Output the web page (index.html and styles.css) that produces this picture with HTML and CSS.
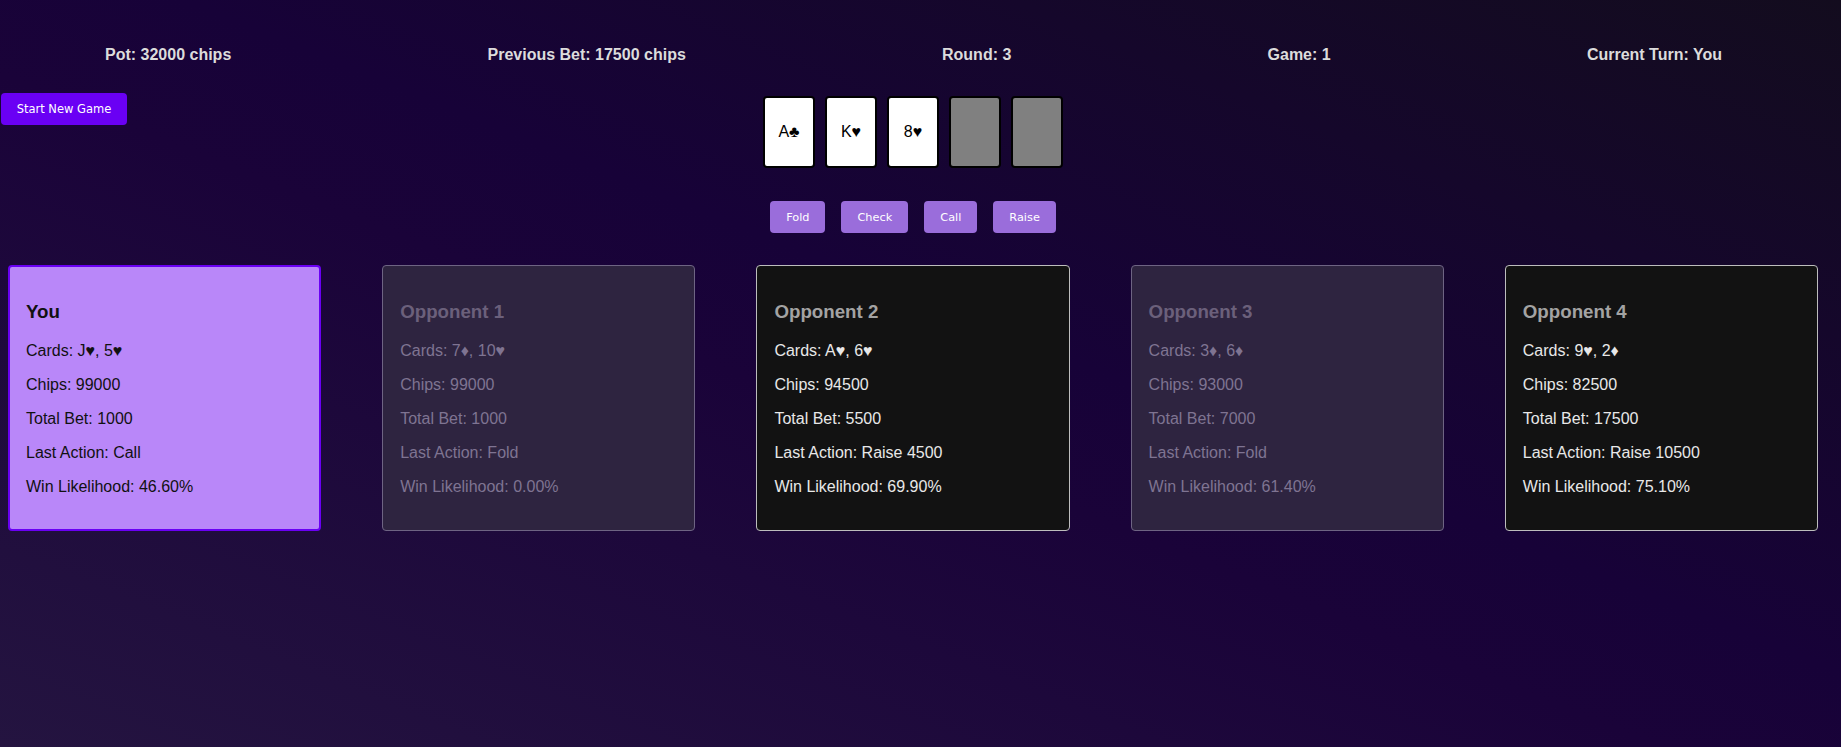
FILE: index.html
```html
<!DOCTYPE html>
<html lang="en">
<head>
<meta charset="utf-8">
<title>Poker</title>
<link rel="stylesheet" href="styles.css">
</head>
<body>
<div class="app">
  <header class="status">
    <div class="stat">Pot: 32000 chips</div>
    <div class="stat">Previous Bet: 17500 chips</div>
    <div class="stat">Round: 3</div>
    <div class="stat">Game: 1</div>
    <div class="stat">Current Turn: You</div>
  </header>

  <section class="table">
    <div class="left">
      <button class="btn-start">Start New Game</button>
    </div>
    <div class="middle">
      <div class="community">
        <div class="pcard">A♣</div>
        <div class="pcard">K♥</div>
        <div class="pcard">8♥</div>
        <div class="pcard hidden"></div>
        <div class="pcard hidden"></div>
      </div>
      <div class="actions">
        <button class="btn-act">Fold</button>
        <button class="btn-act">Check</button>
        <button class="btn-act">Call</button>
        <button class="btn-act">Raise</button>
      </div>
    </div>
    <div class="right"></div>
  </section>

  <section class="players">
    <div class="player you">
      <h3>You</h3>
      <p>Cards: J♥, 5♥</p>
      <p>Chips: 99000</p>
      <p>Total Bet: 1000</p>
      <p>Last Action: Call</p>
      <p>Win Likelihood: 46.60%</p>
    </div>
    <div class="player folded">
      <h3>Opponent 1</h3>
      <p>Cards: 7♦, 10♥</p>
      <p>Chips: 99000</p>
      <p>Total Bet: 1000</p>
      <p>Last Action: Fold</p>
      <p>Win Likelihood: 0.00%</p>
    </div>
    <div class="player active">
      <h3>Opponent 2</h3>
      <p>Cards: A♥, 6♥</p>
      <p>Chips: 94500</p>
      <p>Total Bet: 5500</p>
      <p>Last Action: Raise 4500</p>
      <p>Win Likelihood: 69.90%</p>
    </div>
    <div class="player folded">
      <h3>Opponent 3</h3>
      <p>Cards: 3♦, 6♦</p>
      <p>Chips: 93000</p>
      <p>Total Bet: 7000</p>
      <p>Last Action: Fold</p>
      <p>Win Likelihood: 61.40%</p>
    </div>
    <div class="player active">
      <h3>Opponent 4</h3>
      <p>Cards: 9♥, 2♦</p>
      <p>Chips: 82500</p>
      <p>Total Bet: 17500</p>
      <p>Last Action: Raise 10500</p>
      <p>Win Likelihood: 75.10%</p>
    </div>
  </section>
</div>
</body>
</html>
```

FILE: styles.css
```css
* { box-sizing: border-box; }

html, body {
  margin: 0;
  padding: 0;
}

body {
  min-height: 747px;
  font-family: "Liberation Sans", Arial, sans-serif;
  color: #dddddd;
  background: linear-gradient(to top right, #241440 0%, #1a0339 45%, #170238 55%, #130c1e 100%);
}

.app {
  width: 1826px;
}

.status {
  display: flex;
  justify-content: space-between;
  padding: 46px 104px 0 105px;
}

.stat {
  font-size: 16px;
  font-weight: bold;
  line-height: 18px;
  color: #dcdcdc;
}

.table {
  display: grid;
  grid-template-columns: 1fr auto 1fr;
  align-items: start;
  margin-top: 29px;
}

.left {
  padding-left: 1px;
}

.btn-start {
  font-family: "DejaVu Sans", Verdana, sans-serif;
  font-size: 11.5px;
  color: #ffffff;
  background: #6a00f4;
  border: none;
  border-radius: 4px;
  height: 32px;
  width: 126px;
  padding: 0;
  cursor: pointer;
}

.middle {
  display: flex;
  flex-direction: column;
  align-items: center;
  padding-top: 3px;
}

.community {
  display: flex;
  gap: 10px;
}

.pcard {
  width: 52px;
  height: 72px;
  border: 2px solid #000000;
  border-radius: 4px;
  background: #ffffff;
  color: #000000;
  display: flex;
  align-items: center;
  justify-content: center;
  font-size: 16px;
}

.pcard.hidden {
  background: #808080;
}

.actions {
  display: flex;
  gap: 16px;
  margin-top: 33px;
}

.btn-act {
  font-family: "DejaVu Sans", Verdana, sans-serif;
  font-size: 11.3px;
  color: #ffffff;
  background: #9a6ddb;
  border: none;
  border-radius: 4px;
  height: 32px;
  padding: 0 16px;
  cursor: pointer;
}

.players {
  display: flex;
  gap: 61px;
  padding: 0 8px;
  margin-top: 32px;
}

.player {
  flex: 1;
  height: 266px;
  border-radius: 4px;
  padding: 0 17px;
  border: 1px solid #bdbdbd;
}

.player h3 {
  font-size: 18.72px;
  line-height: 21px;
  margin: 35px 0 20px;
}

.player p {
  font-size: 16px;
  line-height: 18px;
  margin: 0 0 16px;
}

.player.you {
  background: #b987f9;
  border: 2px solid #6a00f4;
  padding: 0 16px;
  color: #111111;
}

.player.you h3 {
  margin-top: 34px;
}

.player.active {
  background: #121212;
  color: #e8e8e8;
}

.player.active h3 {
  color: #a3a3a3;
}

.player.folded {
  background: #2e2440;
  border-color: #6e6483;
  color: #7f7492;
}

.player.folded h3 {
  color: #6b607b;
}
```
